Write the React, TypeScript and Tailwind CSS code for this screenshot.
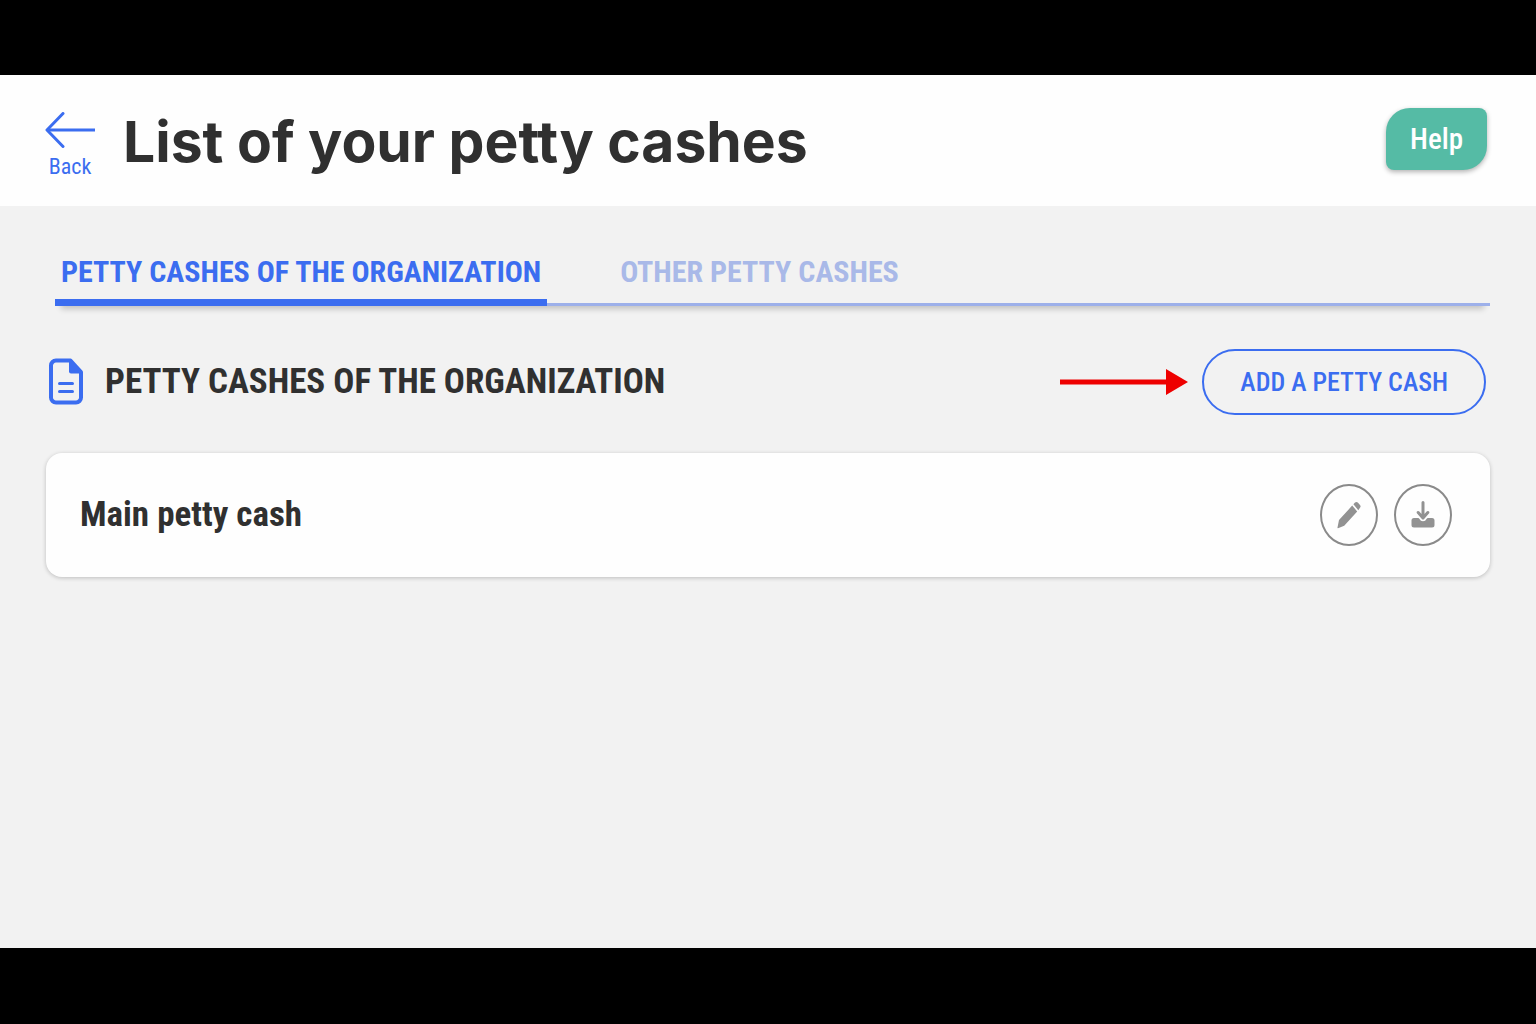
import React, { useState } from 'react';

const tabs = [
  { id: 'organization', label: 'PETTY CASHES OF THE ORGANIZATION' },
  { id: 'other', label: 'OTHER PETTY CASHES' },
];

const pettyCashes = [{ id: 1, name: 'Main petty cash' }];

const BackIcon: React.FC = () => (
  <svg width="50" height="36" viewBox="0 0 50 36" fill="none" stroke="currentColor" strokeWidth="3" aria-hidden="true">
    <path d="M18 1.5 2 18l16 16.5" strokeLinecap="round" strokeLinejoin="round" />
    <path d="M2 18h48" />
  </svg>
);

const DocumentIcon: React.FC = () => (
  <svg width="34" height="48" viewBox="0 0 34 48" fill="none" stroke="#3b6df0" strokeWidth="4" aria-hidden="true">
    <path d="M7 2.500h14.500L32 14v25.500a5 5 0 0 1-5 5H7a5 5 0 0 1-5-5v-32a5 5 0 0 1 5-5Z" strokeLinejoin="round" />
    <path d="M20 2h2l11 11v2.500H22a2 2 0 0 1-2-2Z" fill="#3b6df0" stroke="none" />
    <path d="M10.500 25.500h13M10.500 33.500h13" strokeWidth="3" strokeLinecap="round" />
  </svg>
);

const PencilIcon: React.FC = () => (
  <svg width="24" height="28" viewBox="0 0 24 28" fill="currentColor" aria-hidden="true">
    <path d="m15.200 4.600 5 5.800L7.200 24.800 1 27.200q-.7.100-.5-.6L2 19Z" />
    <path d="m16.400 3.300 1.600-1.800q1.400-1.200 2.800 0l2.200 2.400q1.200 1.400 0 2.800l-1.700 2.500Z" />
  </svg>
);

const DownloadIcon: React.FC = () => (
  <svg width="24" height="28" viewBox="0 0 24 28" aria-hidden="true">
    <path
      d="M3 17h4q1 0 1.500 1 1 2.200 3.500 2.200t3.500-2.200q.5-1 1.500-1h4a2.500 2.500 0 0 1 2.500 2.500v4.500a2.500 2.500 0 0 1-2.500 2.500H3a2.500 2.500 0 0 1-2.500-2.500V19.500A2.500 2.500 0 0 1 3 17Z"
      fill="currentColor"
    />
    <path d="M12 1.500v15M7.200 11.500 12 17l4.800-5.500" fill="none" stroke="currentColor" strokeWidth="3" strokeLinecap="round" strokeLinejoin="round" />
  </svg>
);

const PointerArrow: React.FC = () => (
  <svg width="128" height="26" viewBox="0 0 128 26" fill="#ee0000" aria-hidden="true">
    <path d="M0 10.500h106V0l22 13-22 13V15.500H0Z" />
  </svg>
);

const App: React.FC = () => {
  const [activeTab, setActiveTab] = useState('organization');

  return (
    <div className="flex min-h-screen flex-col bg-black font-['Roboto_Condensed','Roboto',sans-serif] text-[#303030]">
      <div className="mt-[75px] mb-[76px] flex flex-1 flex-col bg-[#f2f2f2]">
        <header className="flex items-start justify-between bg-[#fefefe] pt-[33px] pr-[49px] pb-[27px] pl-[45px]">
          <div className="flex items-start gap-7">
            <a href="#back" className="mt-1 flex flex-col items-center text-[22px] leading-6 text-[#3b6df0]">
              <BackIcon />
              <span className="mt-[7px]">Back</span>
            </a>
            <h1 className="font-['Inter',sans-serif] text-[57px] leading-[68px] font-bold">List of your petty cashes</h1>
          </div>
          <button
            type="button"
            className="rounded-tl-3xl rounded-tr-lg rounded-br-3xl rounded-bl-lg bg-[#55bba5] px-6 py-[15px] text-[29px] leading-8 font-medium text-white shadow-[0_2px_5px_rgba(0,0,0,0.3)]"
          >
            Help
          </button>
        </header>

        <main className="px-[46px] pt-11">
          <div role="tablist" className="ml-[9px] flex gap-[67px] border-b-3 border-[#9db0ea] shadow-[0_9px_6px_-6px_rgba(0,0,0,0.2)]">
            {tabs.map((tab) => (
              <button
                key={tab.id}
                type="button"
                role="tab"
                aria-selected={activeTab === tab.id}
                onClick={() => setActiveTab(tab.id)}
                className={
                  activeTab === tab.id
                    ? '-mb-[3px] border-b-7 border-[#3b6df0] px-[6px] pt-[6px] pb-[11px] text-[30px] leading-8 font-bold text-[#3b6df0]'
                    : '-mb-[3px] border-b-7 border-transparent px-[6px] pt-[6px] pb-[11px] text-[30px] leading-8 font-bold text-[#a9b9e8]'
                }
              >
                {tab.label}
              </button>
            ))}
          </div>

          <section className="mt-[43px]">
            <div className="flex items-center justify-between pr-1 pl-[3px]">
              <div className="flex items-center gap-[22px]">
                <DocumentIcon />
                <h2 className="text-[35px] leading-[42px] font-bold">PETTY CASHES OF THE ORGANIZATION</h2>
              </div>
              <div className="flex items-center gap-[14px]">
                <PointerArrow />
                <button
                  type="button"
                  className="rounded-full border-2 border-[#3b6df0] px-9 py-[15px] text-[26px] leading-8 font-medium text-[#3b6df0]"
                >
                  ADD A PETTY CASH
                </button>
              </div>
            </div>

            <ul className="mt-[38px] space-y-4">
              {pettyCashes.map((item) => (
                <li
                  key={item.id}
                  className="flex items-center justify-between rounded-2xl bg-[#fefefe] py-[31px] pr-[38px] pl-[34px] shadow-[0_1px_4px_rgba(0,0,0,0.22)]"
                >
                  <h3 className="text-[35px] leading-[42px] font-bold">{item.name}</h3>
                  <div className="flex gap-4 text-[#929292]">
                    <button
                      type="button"
                      aria-label="Edit"
                      className="flex h-[62px] w-[58px] items-center justify-center rounded-[50%] border-2 border-[#8a8a8a]"
                    >
                      <PencilIcon />
                    </button>
                    <button
                      type="button"
                      aria-label="Download"
                      className="flex h-[62px] w-[58px] items-center justify-center rounded-[50%] border-2 border-[#8a8a8a]"
                    >
                      <DownloadIcon />
                    </button>
                  </div>
                </li>
              ))}
            </ul>
          </section>
        </main>
      </div>
    </div>
  );
};

export default App;
